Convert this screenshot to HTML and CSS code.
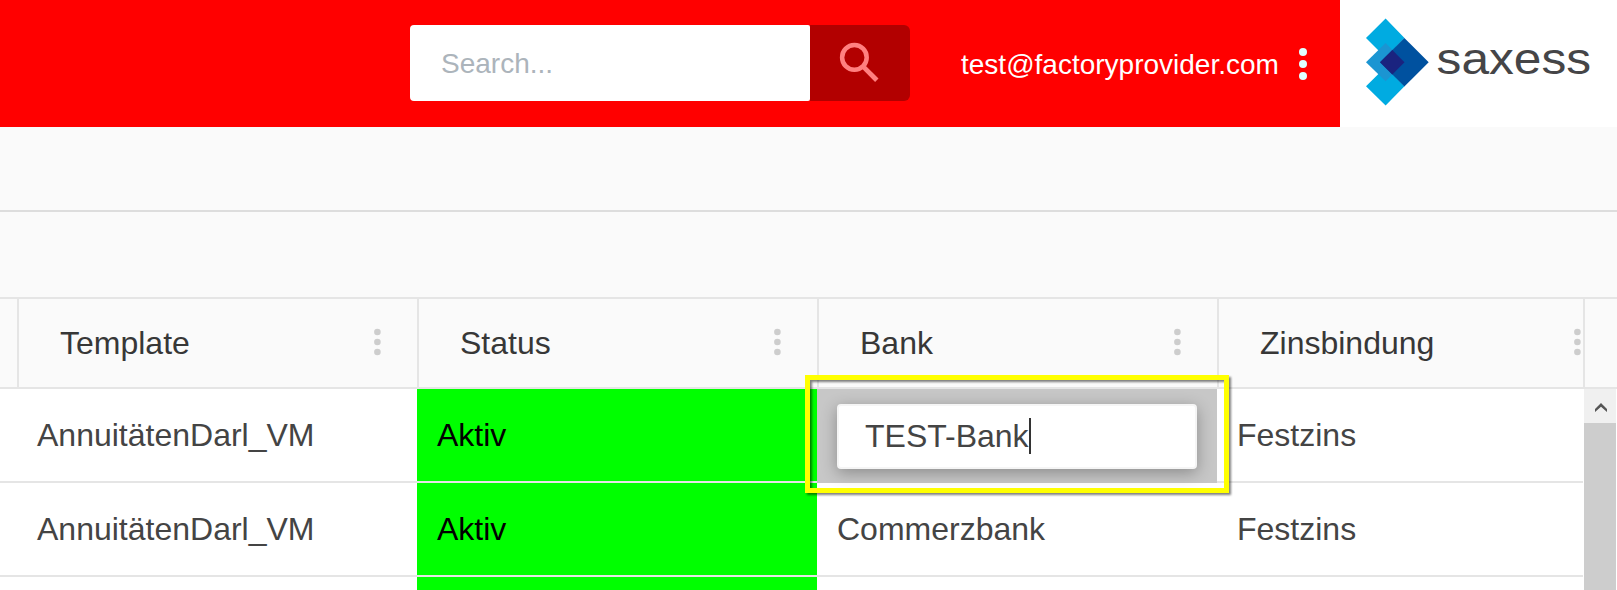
FILE: index.html
```html
<!DOCTYPE html>
<html lang="de">
<head>
<meta charset="utf-8">
<title>Saxess</title>
<link rel="stylesheet" href="styles.css">
</head>
<body>
<svg class="defs" width="0" height="0">
  <symbol id="dots" viewBox="0 0 8 28"><circle cx="4.4" cy="4" r="3.3"/><circle cx="4.4" cy="14" r="3.3"/><circle cx="4.4" cy="24" r="3.3"/></symbol>
</svg>
<header class="topbar">
  <div class="search">
    <div class="search-field">Search...</div>
    <div class="search-button">
      <svg width="42" height="42" viewBox="0 0 42 42" fill="none" stroke="#ff8080"><circle cx="15.4" cy="15.4" r="12.3" stroke-width="4.5"/><path d="M25 25.4 37.8 38.2" stroke-width="4.8"/></svg>
    </div>
  </div>
  <div class="user">test@factoryprovider.com</div>
  <svg class="user-menu" width="8" height="32" viewBox="0 0 8 32" fill="#e0ffff"><circle cx="4" cy="4" r="4"/><circle cx="4" cy="16" r="4"/><circle cx="4" cy="28" r="4"/></svg>
  <div class="logo">
    <svg width="277" height="127" viewBox="0 0 277 127">
      <path fill="#00abe1" d="M45.6 18.6 64.5 38 45.5 57.5 26 38ZM45.6 105.6 64.5 86.3 45.5 67 26 86.3Z"/>
      <path fill="#1b95d2" d="M26 62.2 45.6 43 64.5 62.2 45.6 81.3Z"/>
      <path fill="#00519f" d="M40 62.2 64.4 38 88.7 62.2 64.4 86.4Z"/>
      <path fill="#1a237f" d="M40 62.2 52.3 50 64.5 62.2 52.3 74.4Z"/>
      <text class="logo-text" x="96.6" y="73.5" textLength="154.5" lengthAdjust="spacingAndGlyphs">saxess</text>
    </svg>
  </div>
</header>
<div class="toolbar"></div>
<div class="spacer"></div>
<main class="grid">
  <div class="grid-head">
    <div class="th th-first"></div>
    <div class="th">Template<svg class="menu"><use href="#dots"/></svg></div>
    <div class="th">Status<svg class="menu"><use href="#dots"/></svg></div>
    <div class="th">Bank<svg class="menu"><use href="#dots"/></svg></div>
    <div class="th th-last">Zinsbindung<svg class="menu"><use href="#dots"/></svg></div>
    <div class="th th-end"></div>
  </div>
  <div class="grid-body">
    <div class="rows">
      <div class="row">
        <div class="td first">AnnuitätenDarl_VM</div>
        <div class="td active">Aktiv</div>
        <div class="td editing">
          <div class="editor">TEST-Bank<span class="caret"></span></div>
          <div class="highlight"></div>
        </div>
        <div class="td last">Festzins</div>
      </div>
      <div class="row">
        <div class="td first">AnnuitätenDarl_VM</div>
        <div class="td active">Aktiv</div>
        <div class="td">Commerzbank</div>
        <div class="td last">Festzins</div>
      </div>
      <div class="row row-cut">
        <div class="td first"></div>
        <div class="td active"></div>
        <div class="td"></div>
        <div class="td last"></div>
      </div>
    </div>
    <div class="scrollbar">
      <div class="scroll-up"><svg width="12" height="9" viewBox="0 0 12 9"><path d="M6 0 12 6V9L6 3.8 0 9V6Z" fill="#555"/></svg></div>
      <div class="thumb"></div>
    </div>
  </div>
</main>
</body>
</html>
```

FILE: styles.css
```css
* { box-sizing: border-box; }
body {
  margin: 0;
  height: 590px;
  overflow: hidden;
  display: flex;
  flex-direction: column;
  background: #fafafa;
  color: #444;
  font-family: "Liberation Sans", Arial, sans-serif;
  font-size: 32px;
}
svg { display: block; flex: none; }
.defs { position: absolute; }

.topbar {
  flex: none;
  display: flex;
  align-items: center;
  height: 127px;
  padding-left: 410px;
  background: #f00;
  font-size: 28px;
}
.search { display: flex; height: 76px; margin-bottom: 1px; }
.search-field {
  display: flex;
  align-items: center;
  width: 400px;
  padding: 2px 0 0 31px;
  border-radius: 4px 2px 2px 4px;
  background: #fff;
  color: #acb4bb;
}
.search-button {
  width: 100px;
  padding: 17px 0 0 29px;
  border-radius: 0 6px 6px 0;
  background: #b20000;
}
.user { width: 389px; padding: 3px 0 0 51px; color: #fff; white-space: nowrap; }
.user-menu { margin: 1px 33px 0 0; }
.logo { width: 277px; background: #fff; }
.logo-text { font-size: 45px; fill: #454547; }

.toolbar { flex: none; height: 85px; border-bottom: 2px solid #ddd; }
.spacer { flex: none; height: 85px; }

.grid { flex: 1; display: flex; flex-direction: column; min-height: 0; }
.grid-head {
  flex: none;
  display: flex;
  height: 92px;
  border: solid #e5e5e5;
  border-width: 2px 0;
  color: #373737;
}
.th {
  display: flex;
  flex: none;
  align-items: center;
  justify-content: space-between;
  width: 400px;
  padding: 0 36px 0 41px;
  border-right: 2px solid #e5e5e5;
}
.th-first { width: 19px; padding: 0; }
.th-last { width: 366px; padding-right: 2px; }
.th-end { width: 32px; padding: 0; border: 0; }
.menu { width: 8px; height: 28px; margin-bottom: 2px; fill: #cdcdcd; }

.grid-body { flex: 1; display: flex; min-height: 0; }
.rows { flex: none; width: 1583px; background: #fff; }
.row { display: flex; height: 94px; border-bottom: 2px solid #e5e5e5; }
.row-cut { height: 13px; border: 0; }
.td { display: flex; flex: none; align-items: center; width: 400px; padding-left: 20px; }
.td.first { width: 417px; padding-left: 37px; }
.td.last { width: 366px; }
.active { background: #0f0; color: #000; }
.editing { position: relative; height: 94px; background: #c7c7c7; }
.editor {
  display: flex;
  align-items: center;
  width: 360px;
  height: 65px;
  padding-left: 26px;
  border: 2px solid #f5f5f5;
  border-radius: 4px;
  background: #fff;
  box-shadow: 0 4px 16px rgba(0, 0, 0, .3);
}
.caret { width: 2px; height: 36px; background: #333; }
.highlight {
  position: absolute;
  left: -12px;
  top: -14px;
  width: 424px;
  height: 118px;
  border: 5px solid #ff0;
  filter: drop-shadow(2px 2px 1px rgba(0, 0, 0, .5));
}

.scrollbar { flex: none; display: flex; flex-direction: column; width: 34px; padding: 0 1px; background: #fff; }
.scroll-up { flex: none; height: 34px; padding: 14px 0 0 11px; background: #f0f0f0; }
.thumb { flex: 1; background: #cdcdcd; }
```
